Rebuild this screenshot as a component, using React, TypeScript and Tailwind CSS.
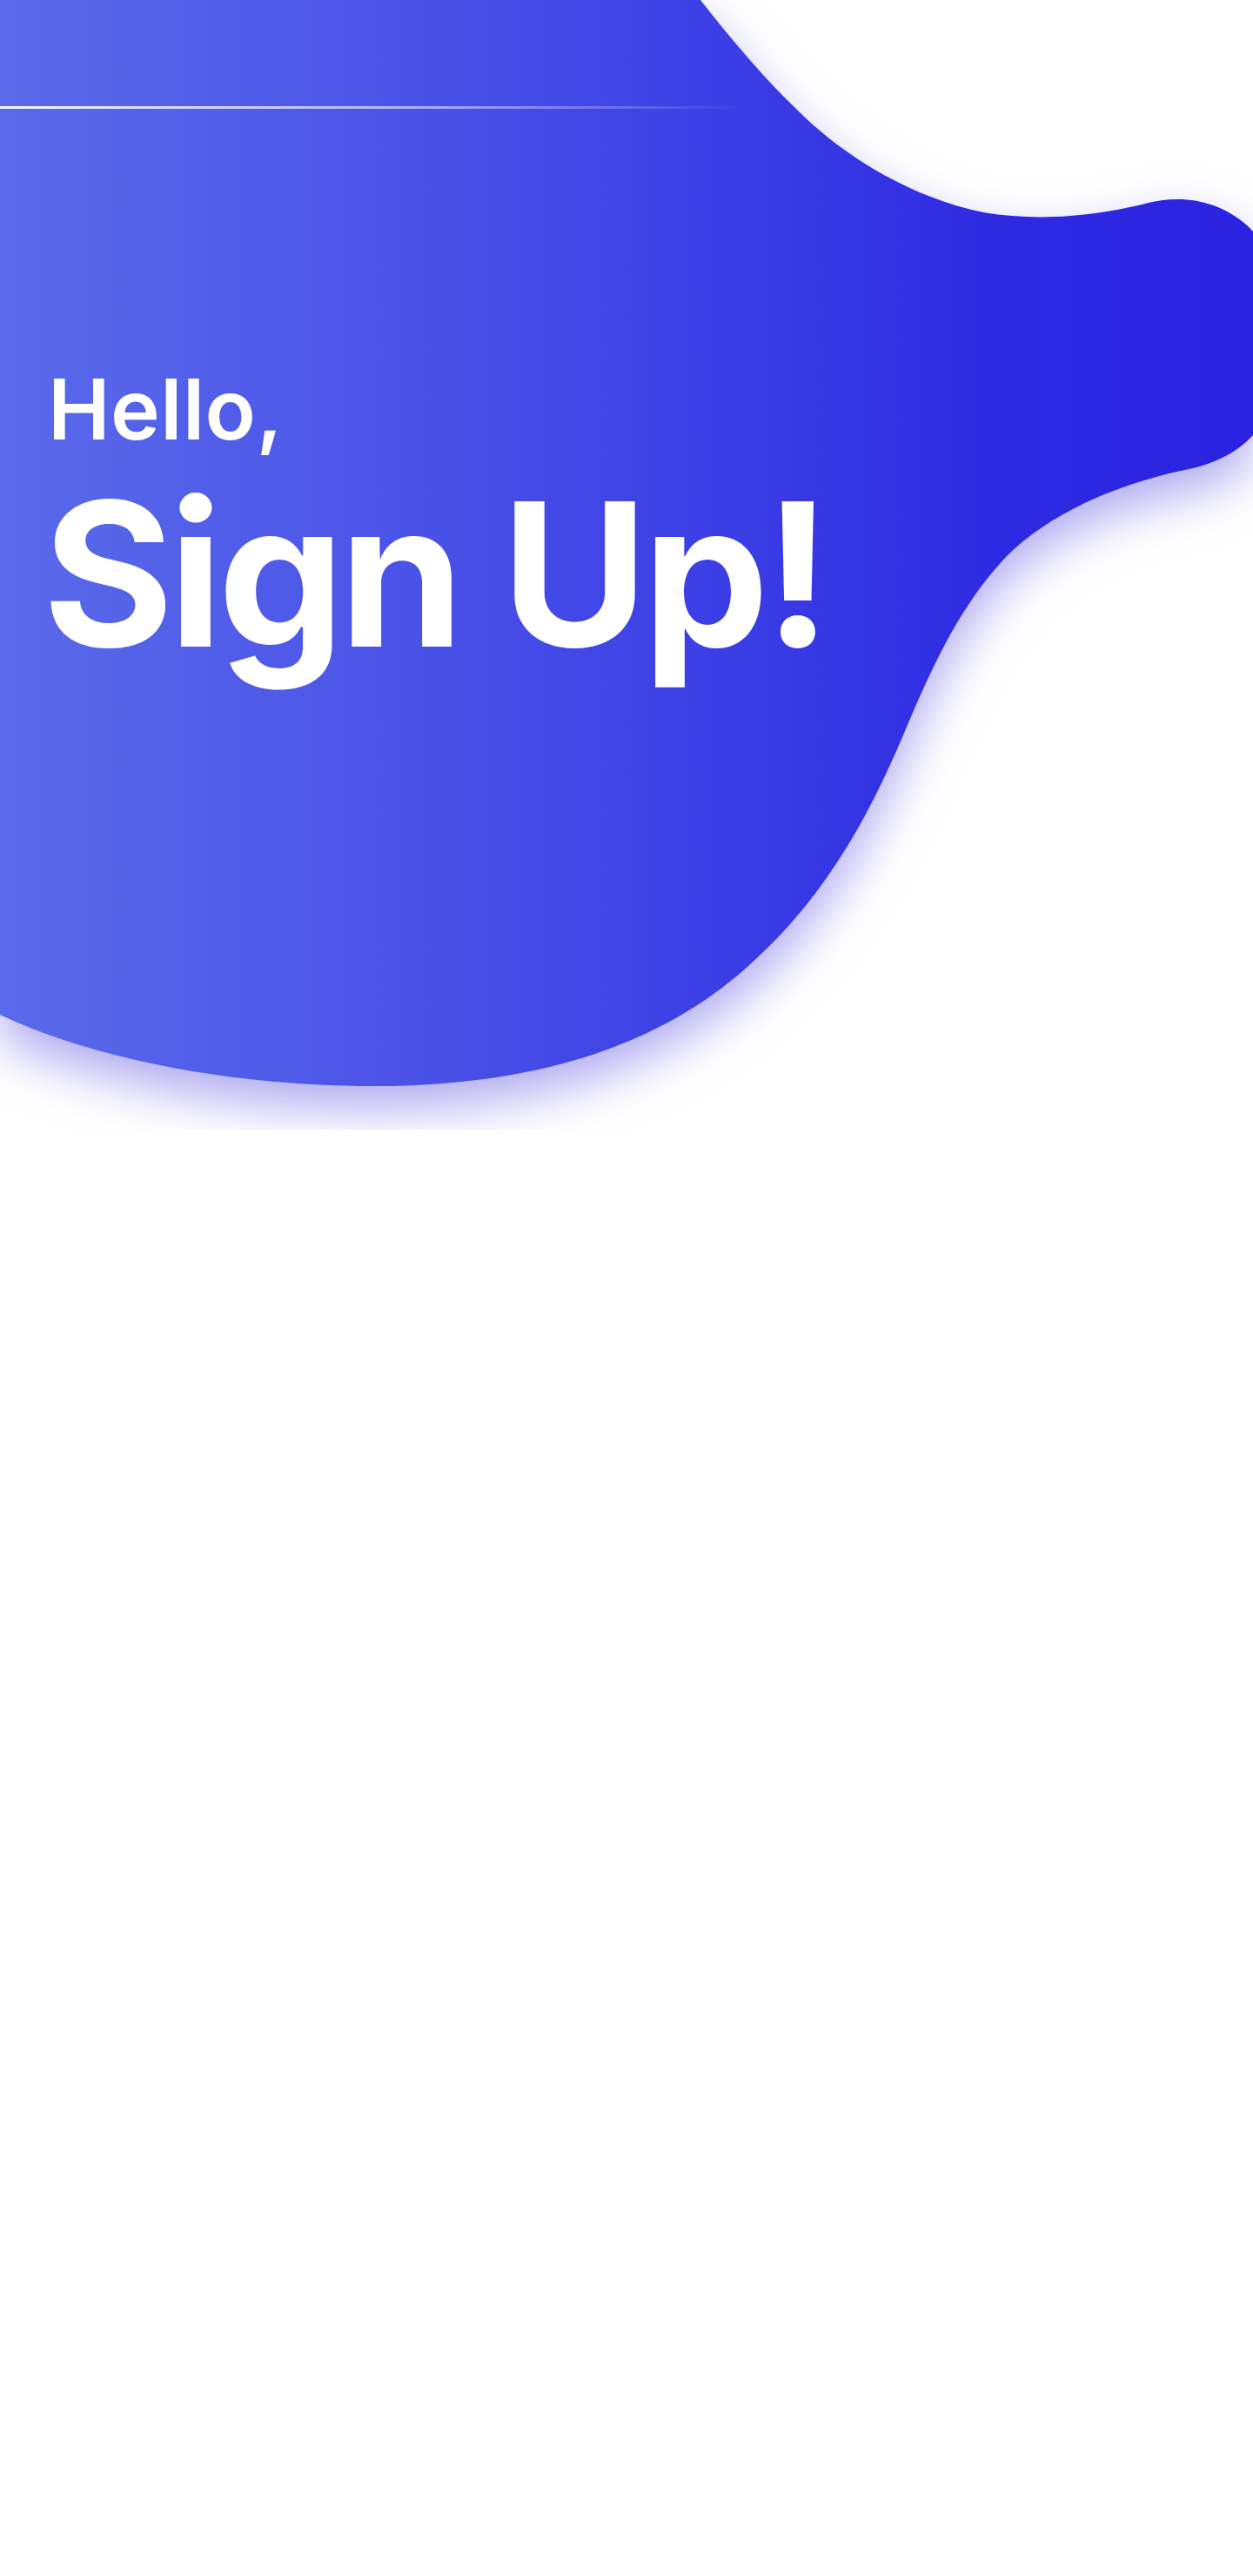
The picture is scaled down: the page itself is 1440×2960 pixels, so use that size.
export default function App() {
  return (
    <div className="min-h-[2960px] w-full bg-white" style={{ fontFamily: 'Inter, "Open Sans", sans-serif' }}>
      <section className="relative h-[1298px] w-full overflow-hidden">
        {/* blob artwork */}
        <svg
          className="absolute inset-0 h-[1300px] w-[1440px] drop-shadow-[0_26px_28px_rgba(98,88,228,0.5)]"
          viewBox="0 0 1440 1300"
          preserveAspectRatio="none"
        >
          <defs>
            <linearGradient id="blobFill" x1="0" y1="0" x2="1440" y2="0" gradientUnits="userSpaceOnUse">
              <stop offset="0" stopColor="#5a6aea" />
              <stop offset="0.3" stopColor="#4b55e8" />
              <stop offset="0.6" stopColor="#3a3ce5" />
              <stop offset="0.8" stopColor="#2e2ae2" />
              <stop offset="1" stopColor="#2a22e0" />
            </linearGradient>
            <linearGradient id="seam" x1="0" y1="0" x2="1" y2="0">
              <stop offset="0" stopColor="#ffffff" stopOpacity="0.95" />
              <stop offset="0.55" stopColor="#ffffff" stopOpacity="0.55" />
              <stop offset="1" stopColor="#ffffff" stopOpacity="0" />
            </linearGradient>
          </defs>
          <path
            fill="url(#blobFill)"
            d="M0,0 L805,0 C838,42 878,90 918,128 C962,172 1040,226 1130,244 C1200,256 1270,246 1320,233 C1362,223 1402,232 1432,258 C1480,300 1500,430 1440,500 C1420,522 1392,534 1362,540 C1284,556 1206,590 1156,640 C1100,700 1070,770 1040,840 C1000,935 950,1030 860,1110 C760,1200 620,1248 430,1248 C270,1248 110,1218 0,1166 Z"
          />
          <rect x="0" y="122" width="860" height="3" fill="url(#seam)" />
        </svg>

        <div className="relative pl-[55px] pt-[422px] text-white">
          <p className="text-[96px] font-semibold leading-none tracking-[0.005em]">Hello,</p>
          <h1 className="-ml-[6px] mt-[26px] text-[230px] font-bold leading-none tracking-[-0.025em]">Sign Up!</h1>
        </div>
      </section>
    </div>
  )
}
